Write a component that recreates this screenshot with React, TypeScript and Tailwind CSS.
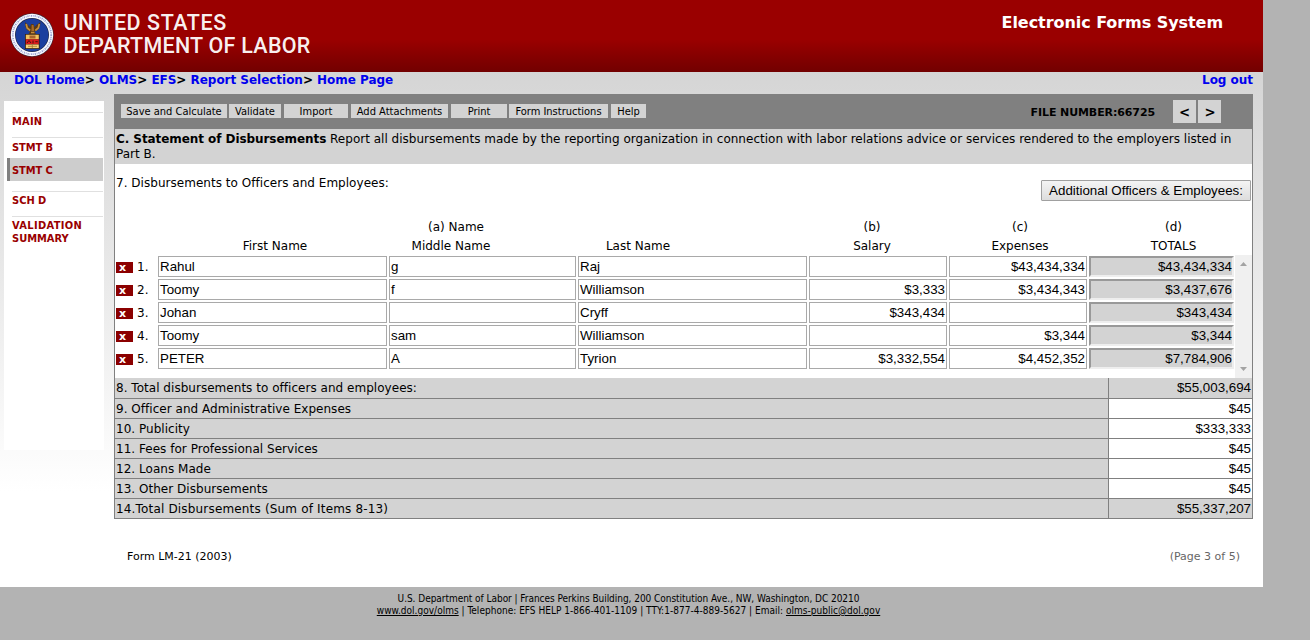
import React from "react";

const people = [
  ["Rahul", "g", "Raj", "", "$43,434,334", "$43,434,334"],
  ["Toomy", "f", "Williamson", "$3,333", "$3,434,343", "$3,437,676"],
  ["Johan", "", "Cryff", "$343,434", "", "$343,434"],
  ["Toomy", "sam", "Williamson", "", "$3,344", "$3,344"],
  ["PETER", "A", "Tyrion", "$3,332,554", "$4,452,352", "$7,784,906"],
];

const items = [
  ["9. Officer and Administrative Expenses", "$45"],
  ["10. Publicity", "$333,333"],
  ["11. Fees for Professional Services", "$45"],
  ["12. Loans Made", "$45"],
  ["13. Other Disbursements", "$45"],
];

function Seal() {
  return (
    <svg className="mt-[13px] ml-[10px] h-[44px] w-[44px] shrink-0" viewBox="0 0 44 44">
      <circle cx="22" cy="22" r="21.8" fill="#3c2a3a" />
      <circle cx="22" cy="22" r="21.2" fill="#fbfbff" />
      <circle cx="22" cy="22" r="19.200" fill="none" stroke="#9aa5d4" strokeWidth="1.800" strokeDasharray="1.300 .9 .7 .8" />
      <circle cx="22" cy="22" r="17" fill="#222b4d" />
      <circle cx="22" cy="22" r="16.300" fill="#1c3f9f" />
      <path d="M15 9l.3 4.500 1.700 3.500 3 1.500-1.500 2.500h7.500l-1.500-2.500 3.500-1.500 2-3.500.5-4.500-4 3-2 2-1-3h-2.500l-1 3-2-2z" fill="#5a3814" />
      <path d="M16.200 11l1 4 3 2.500M29.300 11l-1 4-3 2.500M21 19.500h3.500" fill="none" stroke="#c58e3c" strokeWidth="1.700" />
      <path d="M21.700 12h1.800l.7 6h-2.800z" fill="#a86a24" />
      <rect x="15" y="21" width="14.600" height="15" fill="#2b1a12" />
      <rect x="15.800" y="21.700" width="13" height="4.600" fill="#f0c260" />
      <path d="M19.500 22.500h6v3h-6z" fill="#a8642c" />
      <rect x="15.800" y="26.300" width="13" height="5" fill="#dc1c1c" />
      <path d="M17 30l2-2.500 2 2.500M23 27.500v3M25.300 28.700h2.500" fill="none" stroke="#3a1010" strokeWidth=".9" />
      <rect x="15.800" y="31.500" width="13" height="3.700" fill="#f6d27a" />
      <path d="M18 33.300h9M22.300 32v3" stroke="#a5772f" strokeWidth=".8" />
    </svg>
  );
}

function Tool({ w, children }: { w: string; children: React.ReactNode }) {
  return (
    <button className={`h-[14px] whitespace-nowrap bg-[#d3d3d3] text-center text-[11px] leading-[15px] ${w}`}>{children}</button>
  );
}

function Field({ w, right, children }: { w: string; right?: boolean; children: React.ReactNode }) {
  return (
    <div className={`mr-[2px] h-[21px] border border-[#a9a9a9] bg-white px-px font-['Liberation_Sans'] text-[13.33px] leading-[19px] ${right ? "text-right" : ""} ${w}`}>
      {children}
    </div>
  );
}

function Total({ top, last, label, value }: { top?: boolean; last?: boolean; label: string; value: string }) {
  return (
    <div className={`flex border-b border-[#808080] text-[12px] ${top ? "h-[21px]" : "h-[20px]"}`}>
      <div className={`w-[994px] border-r border-[#808080] bg-[#d3d3d3] pl-px leading-[20px] ${last ? "tracking-[0.17px]" : "tracking-[0.03px]"}`}>{label}</div>
      <div className={`flex-1 pr-px text-right font-['Liberation_Sans'] text-[13.33px] leading-[20px] ${top || last ? "bg-[#d3d3d3]" : "bg-white"}`}>{value}</div>
    </div>
  );
}

export default function App() {
  return (
    <div className="h-[640px] w-[1310px] overflow-hidden bg-[#b3b3b3] font-['DejaVu_Sans',sans-serif] text-[12px] text-black">
      <div className="h-[587px] w-[1263px] bg-white">
        <header className="flex h-[72px] bg-linear-to-b from-[#9a0000] from-55% to-[#720000]">
          <Seal />
          <div className="mt-[11px] ml-[9.5px] flex-1 font-['Roboto'] text-[21.5px] leading-[23px] font-medium text-white/95">
            <div className="tracking-[0.55px]">UNITED STATES</div>
            <div className="tracking-[0.25px]">DEPARTMENT OF LABOR</div>
          </div>
          <div className="mt-[12px] mr-[40px] text-[16px] leading-[22px] font-bold tracking-[-0.06px] text-white">Electronic Forms System</div>
        </header>

        <div className="h-[515px] bg-linear-to-b from-[#d5d5d5] to-white to-[420px]">
          <nav className="flex h-[22px] justify-between pr-[10px] pl-[14px] text-[12px] leading-[16px] font-bold tracking-[-0.03px]">
            <div>
              <span className="text-[#0000ee]">DOL Home</span>&gt; <span className="text-[#0000ee]">OLMS</span>&gt;{" "}
              <span className="text-[#0000ee]">EFS</span>&gt; <span className="text-[#0000ee]">Report Selection</span>&gt;{" "}
              <span className="text-[#0000ee]">Home Page</span>
            </div>
            <span className="text-[#0000ee]">Log out</span>
          </nav>

          <div className="flex">
            <aside className="mt-[7px] ml-[4px] h-[349px] w-[100px] bg-white pt-[11px] pr-px font-['DejaVu_Sans_Condensed'] text-[11px] leading-[13px] font-bold text-[#990000]">
              <div className="ml-[8px] h-[25px] border-t border-[#e0e0e0] pt-[2px] tracking-[0.2px]">MAIN</div>
              <div className="ml-[8px] h-[21px] border-t border-[#e0e0e0] pt-[3px] tracking-[-0.1px]">STMT B</div>
              <div className="ml-[3px] h-[23px] border-l-[3px] border-[#808080] bg-[#cdcdcd] pl-[2px] leading-[25px] tracking-[-0.1px]">STMT C</div>
              <div className="mt-[10px] ml-[8px] h-[25px] border-t border-[#e0e0e0] pt-[2px]">SCH D</div>
              <div className="ml-[8px] border-t border-[#e0e0e0] pt-[2px]"><span className="tracking-[0.35px]">VALIDATION</span><br />SUMMARY</div>
            </aside>

            <main className="ml-[10px] w-[1139px]">
              <div className="flex h-[35px] bg-[#808080] pt-[10px] pl-[7px] font-['DejaVu_Sans_Condensed']">
                <Tool w="w-[106px] mr-[2px]">Save and Calculate</Tool>
                <Tool w="w-[52px] mr-[3px]">Validate</Tool>
                <Tool w="w-[64px] mr-[3px]">Import</Tool>
                <Tool w="w-[97px] mr-[3px]">Add Attachments</Tool>
                <Tool w="w-[56px] mr-[2px]">Print</Tool>
                <Tool w="w-[99px] mr-[3px]">Form Instructions</Tool>
                <Tool w="w-[35px]">Help</Tool>
                <div className="mr-[18px] ml-auto font-['DejaVu_Sans'] text-[11px] leading-[17px] font-bold tracking-[-0.1px]">FILE NUMBER:66725</div>
                <button className="-mt-[4px] mr-[2px] h-[23px] w-[23px] bg-[#d3d3d3] font-['DejaVu_Sans'] text-[13.33px] leading-[26px] font-bold">&lt;</button>
                <button className="-mt-[4px] mr-[32px] h-[23px] w-[23px] bg-[#d3d3d3] pl-px font-['DejaVu_Sans'] text-[13.33px] leading-[26px] font-bold">&gt;</button>
              </div>

              <div className="border-x border-[#808080] bg-white">
                <div className="h-[35px] bg-[#d3d3d3] pt-[3px] pl-px leading-[15px] whitespace-nowrap">
                  <b className="tracking-[-0.07px]">C. Statement of Disbursements</b><span className="tracking-[0.012px]"> Report all disbursements made by the reporting organization in connection with labor relations advice or services rendered to the employers listed in</span><br />Part B.
                </div>

                <div className="flex h-[54px] justify-between">
                  <div className="pt-[11px] pl-px leading-[16px] tracking-[0.03px]">7. Disbursements to Officers and Employees:</div>
                  <button className="mt-[16px] mr-px h-[21px] w-[210px] rounded-[1px] border border-[#a0a0a0] bg-linear-to-b from-[#f4f4f4] to-[#dddddd] font-['Liberation_Sans'] text-[13.33px] leading-[19px] whitespace-nowrap">Additional Officers &amp; Employees:</button>
                </div>

                <div className="flex h-[37px] text-center leading-[19px]">
                  <div className="ml-[43px] w-[234px] pt-[19px]">First Name</div>
                  <div className="w-[118px] whitespace-nowrap"><div className="pl-[10px]">(a) Name</div>Middle Name</div>
                  <div className="ml-[69px] w-[118px] pt-[19px]">Last Name</div>
                  <div className="ml-[106px] w-[138px]">(b)<br />Salary</div>
                  <div className="ml-[10px] w-[138px]">(c)<br />Expenses</div>
                  <div className="ml-[12px] w-[145px]">(d)<br />TOTALS</div>
                </div>

                <div className="flex h-[123px]">
                  <div className="w-[1120px] pt-px">
                    {people.map((p, i) => (
                      <div key={i} className="flex h-[23px]">
                        <div className="mt-[6px] ml-px h-[11px] w-[17px] bg-[#8b0000] pr-[4px] text-center text-[11px] leading-[11px] font-bold text-white">x</div>
                        <div className="ml-[4px] w-[21px] leading-[22px]">{i + 1}.</div>
                        <Field w="w-[229px]">{p[0]}</Field>
                        <Field w="w-[187px]">{p[1]}</Field>
                        <Field w="w-[229px]">{p[2]}</Field>
                        <Field w="w-[138px]" right>{p[3]}</Field>
                        <Field w="w-[138px]" right>{p[4]}</Field>
                        <div className="h-[21px] w-[145px] border-2 border-t-[#999999] border-r-[#eeeeee] border-b-[#eeeeee] border-l-[#999999] bg-[#d3d3d3] text-right font-['Liberation_Sans'] text-[13.33px] leading-[17px]">{p[5]}</div>
                      </div>
                    ))}
                  </div>
                  <div className="flex w-[17px] flex-col items-center justify-between bg-[#f0f0f0] pt-[7px] pb-[7px]">
                    <svg className="h-[4px] w-[7px]" viewBox="0 0 7 4"><path d="M0 4L3.500 0L7 4z" fill="#a3a3a3" /></svg>
                    <svg className="h-[4px] w-[7px]" viewBox="0 0 7 4"><path d="M0 0L3.500 4L7 0z" fill="#a3a3a3" /></svg>
                  </div>
                </div>

                <Total top label="8. Total disbursements to officers and employees:" value="$55,003,694" />
                {items.map(([l, v]) => <Total key={l} label={l} value={v} />)}
                <Total last label="14.Total Disbursements (Sum of Items 8-13)" value="$55,337,207" />
              </div>

              <div className="mt-[29px] flex justify-between pr-[13px] pl-[13px] text-[11px] leading-[17px]">
                <span>Form LM-21 (2003)</span>
                <span className="text-[#666666]">(Page 3 of 5)</span>
              </div>
            </main>
          </div>
        </div>
      </div>
      <footer className="w-[1257px] pt-[6px] text-center font-['DejaVu_Sans_Condensed'] text-[10px] leading-[12px]">
        <div className="tracking-[-0.04px]">U.S. Department of Labor | Frances Perkins Building, 200 Constitution Ave., NW, Washington, DC 20210</div>
        <div className="tracking-[0.02px]"><span className="underline">www.dol.gov/olms</span> | Telephone: EFS HELP 1-866-401-1109 | TTY:1-877-4-889-5627 | Email: <span className="underline">olms-public@dol.gov</span></div>
      </footer>
    </div>
  );
}
